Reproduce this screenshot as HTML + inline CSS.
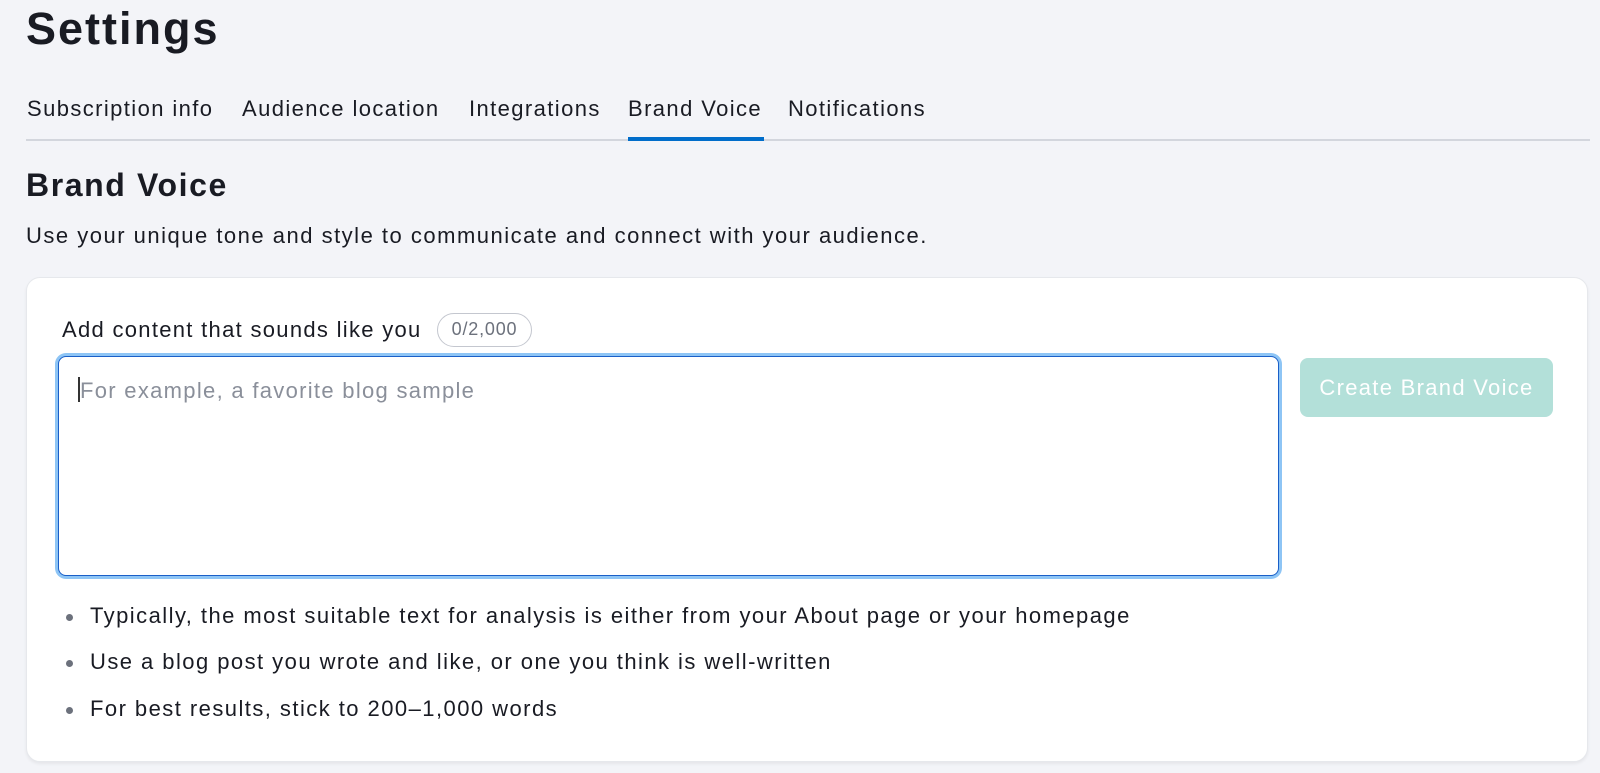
<!DOCTYPE html>
<html><head><meta charset="utf-8"><style>
*{box-sizing:border-box;margin:0;padding:0}
body{width:1600px;height:773px;background:#f3f4f8;font-family:"Liberation Sans",Arial,sans-serif;color:#191b23;position:relative;overflow:hidden}
.abs{position:absolute;white-space:nowrap}
h1{position:absolute;left:26px;top:3px;font-size:45px;font-weight:600;letter-spacing:2px}
.tab{position:absolute;top:96px;font-size:22px;letter-spacing:1.4px}
.line{position:absolute;left:26px;right:10px;top:139px;height:2px;background:#d3d6dd}
.act{position:absolute;left:628px;width:136px;top:137px;height:4px;background:#006dca}
h2{position:absolute;left:26px;top:167px;font-size:32px;font-weight:600;letter-spacing:1.6px}
.desc{position:absolute;left:26px;top:223px;font-size:22px;letter-spacing:1.5px}
.card{position:absolute;left:26px;top:277px;width:1562px;height:485px;background:#fff;border-radius:14px;border:1px solid #e6e8ec;box-shadow:0 2px 3px rgba(0,0,0,.06)}
.lbl{position:absolute;left:62px;top:317px;font-size:22px;letter-spacing:1.3px}
.pill{position:absolute;left:437px;top:313px;width:95px;height:34px;border:1.5px solid #c4c7cf;border-radius:17px;font-size:18px;letter-spacing:0.8px;color:#6c717c;text-align:center;line-height:31px}
.ta{position:absolute;left:58px;top:356px;width:1221px;height:220px;border:1.5px solid #1a5fc8;border-radius:8px;box-shadow:0 0 0 3px #8ec5f5;background:#fff}
.ph{position:absolute;left:80px;top:378px;font-size:22px;letter-spacing:1.3px;color:#8a8f9a}
.caret{position:absolute;left:78px;top:377px;width:2px;height:25px;background:#333}
.btn{position:absolute;left:1300px;top:358px;width:253px;height:59px;background:#b3e0d9;border-radius:8px;color:#fff;font-size:22px;letter-spacing:1.3px;text-align:center;line-height:59px}
.li{position:absolute;left:90px;font-size:22px;letter-spacing:1.45px}
.dot{position:absolute;left:66px;width:7px;height:7px;border-radius:50%;background:#6c717c}
</style></head><body>
<h1>Settings</h1>
<div class="tab abs" style="left:27px">Subscription info</div>
<div class="tab abs" style="left:242px">Audience location</div>
<div class="tab abs" style="left:469px">Integrations</div>
<div class="tab abs" style="left:628px">Brand Voice</div>
<div class="tab abs" style="left:788px">Notifications</div>
<div class="line"></div><div class="act"></div>
<h2>Brand Voice</h2>
<div class="desc abs">Use your unique tone and style to communicate and connect with your audience.</div>
<div class="card"></div>
<div class="lbl abs">Add content that sounds like you</div>
<div class="pill">0/2,000</div>
<div class="ta"></div>
<div class="ph abs">For example, a favorite blog sample</div>
<div class="caret"></div>
<div class="btn">Create Brand Voice</div>
<div class="dot" style="top:614px"></div><div class="li abs" style="top:603px">Typically, the most suitable text for analysis is either from your About page or your homepage</div>
<div class="dot" style="top:660px"></div><div class="li abs" style="top:649px">Use a blog post you wrote and like, or one you think is well-written</div>
<div class="dot" style="top:707px"></div><div class="li abs" style="top:696px">For best results, stick to 200–1,000 words</div>
</body></html>
